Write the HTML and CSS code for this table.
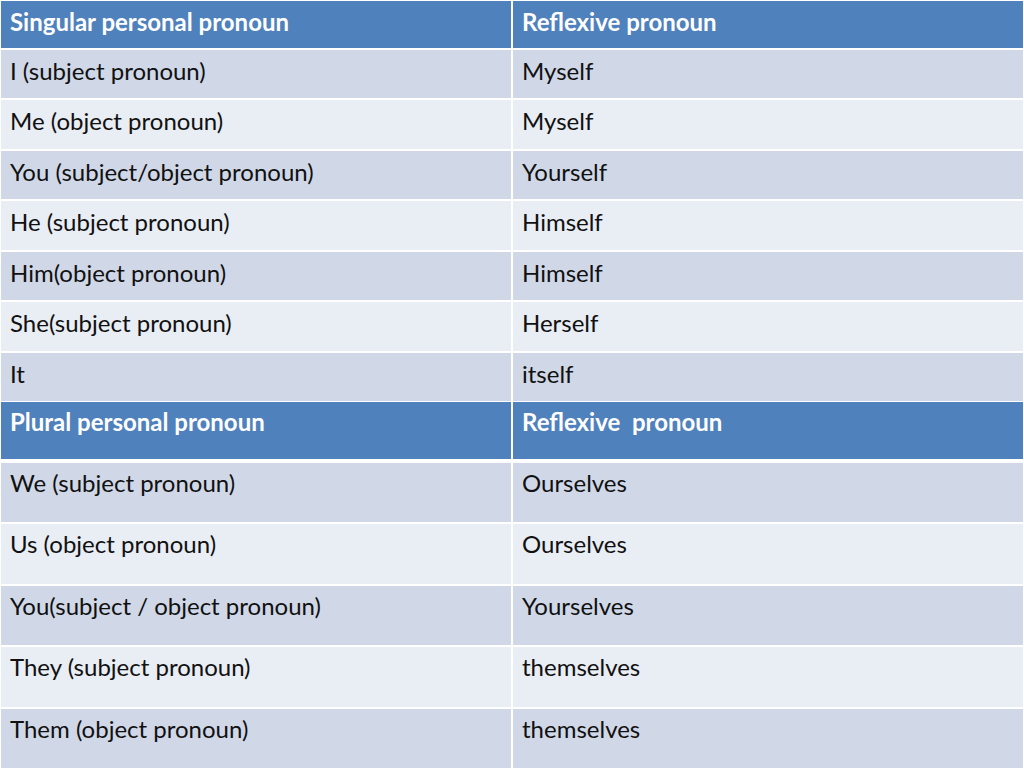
FILE: index.html
```html
<!DOCTYPE html>
<html>
<head>
<meta charset="utf-8">
<link rel="stylesheet" href="styles.css">
</head>
<body>
<div class="table">
  <div class="section first">
    <div class="cell head">Singular personal pronoun</div><div class="cell head">Reflexive pronoun</div>
    <div class="cell dark">I (subject pronoun)</div><div class="cell dark">Myself</div>
    <div class="cell light">Me (object pronoun)</div><div class="cell light">Myself</div>
    <div class="cell dark">You (subject/object pronoun)</div><div class="cell dark">Yourself</div>
    <div class="cell light">He (subject pronoun)</div><div class="cell light">Himself</div>
    <div class="cell dark">Him(object pronoun)</div><div class="cell dark">Himself</div>
    <div class="cell light">She(subject pronoun)</div><div class="cell light">Herself</div>
    <div class="cell dark">It</div><div class="cell dark">itself</div>
  </div>
  <div class="section second">
    <div class="cell head">Plural personal pronoun</div><div class="cell head">Reflexive&nbsp; pronoun</div>
    <div class="cell dark">We (subject pronoun)</div><div class="cell dark">Ourselves</div>
    <div class="cell light">Us (object pronoun)</div><div class="cell light">Ourselves</div>
    <div class="cell dark">You(subject / object pronoun)</div><div class="cell dark">Yourselves</div>
    <div class="cell light">They (subject pronoun)</div><div class="cell light">themselves</div>
    <div class="cell dark">Them (object pronoun)</div><div class="cell dark">themselves</div>
  </div>
</div>
</body>
</html>
```
FILE: styles.css
```css
html, body {
  margin: 0;
  padding: 0;
  background: #ffffff;
}
body {
  width: 1024px;
  height: 768px;
  overflow: hidden;
  font-family: Lato, "Open Sans", sans-serif;
  font-size: 24px;
  color: #111111;
}
.table {
  display: flex;
  flex-direction: column;
  padding: 1px 1px 0 1px;
  height: 767px;
}
.section {
  display: grid;
  grid-template-columns: 510px 510px;
  column-gap: 2px;
  row-gap: 2px;
}
.first {
  grid-template-rows: 47px repeat(7, 48.43px);
}
.second {
  margin-top: 1px;
  grid-template-rows: 59px repeat(5, 59.4px);
}
.second .head { margin-bottom: 2px; }
.cell {
  padding: 7px 0 0 9px;
  line-height: 28px;
  white-space: nowrap;
}
.second .cell { padding-top: 6px; }
.head {
  background: #4f81bd;
  color: #ffffff;
  font-weight: 700;
}
.dark { background: #d0d8e8; }
.light { background: #e9edf4; }
```
